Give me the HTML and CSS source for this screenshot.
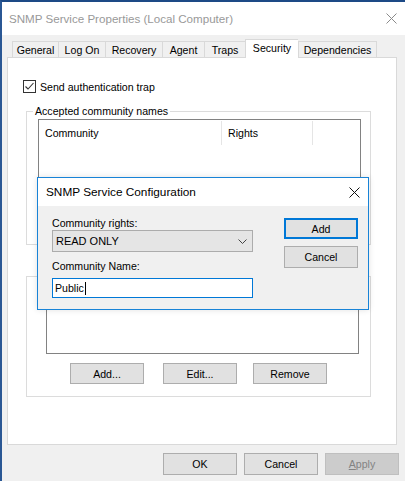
FILE: index.html
```html
<!DOCTYPE html>
<html>
<head>
<meta charset="utf-8">
<link rel="stylesheet" href="styles.css">
</head>
<body>
<div class="window">
  <div class="titlebar">
    <span class="title">SNMP Service Properties (Local Computer)</span>
    <svg class="close" width="11" height="11" viewBox="0 0 11 11"><path d="M0.5 0.5 L10.5 10.5 M10.5 0.5 L0.5 10.5" stroke="#8a8a8a" stroke-width="1" fill="none"/></svg>
  </div>
  <div class="main">
    <div class="tabs">
      <div class="tab w1">General</div>
      <div class="tab w2">Log On</div>
      <div class="tab w3">Recovery</div>
      <div class="tab w4">Agent</div>
      <div class="tab w5">Traps</div>
      <div class="tab w6 active">Security</div>
      <div class="tab w7 last">Dependencies</div>
    </div>
    <div class="panel">
      <div class="check">
        <svg class="box" width="13" height="13" viewBox="0 0 13 13"><rect x="0.5" y="0.5" width="12" height="12" fill="#fff" stroke="#333"/><path d="M2.5 6.5 L5 9 L10.5 3" stroke="#333" stroke-width="1.1" fill="none"/></svg>
        <span>Send authentication trap</span>
      </div>
      <fieldset class="group g1">
        <legend>Accepted community names</legend>
        <div class="list l1">
          <div class="lhead">
            <div class="col c1">Community</div>
            <div class="col c2">Rights</div>
            <div class="col c3"></div>
          </div>
        </div>
      </fieldset>
      <fieldset class="group g2">
        <div class="list l2"></div>
        <div class="btnrow">
          <div class="btn">Add...</div>
          <div class="btn b-edit">Edit...</div>
          <div class="btn b-remove">Remove</div>
        </div>
      </fieldset>
    </div>
    <div class="footer">
      <div class="btn">OK</div>
      <div class="btn">Cancel</div>
      <div class="btn disabled"><u>A</u>pply</div>
    </div>
  </div>

  <div class="dialog">
    <div class="dtitle">
      <span>SNMP Service Configuration</span>
      <svg class="dclose" width="11" height="11" viewBox="0 0 11 11"><path d="M0.5 0.5 L10.5 10.5 M10.5 0.5 L0.5 10.5" stroke="#111" stroke-width="1" fill="none"/></svg>
    </div>
    <div class="dbody">
      <div class="dleft">
        <div class="dlabel first">Community rights:</div>
        <div class="combo">
          <span>READ ONLY</span>
          <svg width="9" height="5" viewBox="0 0 9 5"><path d="M0.5 0.5 L4.5 4.5 L8.5 0.5" stroke="#444" stroke-width="1" fill="none"/></svg>
        </div>
        <div class="dlabel second">Community Name:</div>
        <div class="textbox"><span>Public</span><span class="caret"></span></div>
      </div>
      <div class="dright">
        <div class="btn default">Add</div>
        <div class="btn dcancel">Cancel</div>
      </div>
    </div>
  </div>
</div>
</body>
</html>
```

FILE: styles.css
```css
* { box-sizing: border-box; }
html, body { margin: 0; padding: 0; }
body {
  width: 405px;
  height: 481px;
  overflow: hidden;
  font-family: "Segoe UI", "Liberation Sans", Arial, sans-serif;
  font-size: 10.6px;
  color: #000;
  background: #f0f0f0;
}
.window {
  position: relative;
  width: 405px;
  height: 481px;
  border-left: 2px solid #2a5794;
  border-top: 2px solid #1d4a86;
  background: #f0f0f0;
  display: flex;
  flex-direction: column;
}
.titlebar {
  height: 33px;
  background: #fff;
  display: flex;
  align-items: center;
  justify-content: space-between;
  padding: 0 8px 0 7px;
}
.title {
  font-size: 11.6px;
  color: #999;
}
.main {
  flex: 1;
  padding-left: 5px;
  display: flex;
  flex-direction: column;
}
.tabs {
  margin-top: 4px;
  height: 19px;
  padding-left: 5px;
  display: flex;
  align-items: flex-end;
  border-bottom: 1px solid #d9d9d9;
  width: 390px;
}
.tab {
  height: 16px;
  border: 1px solid #d9d9d9;
  border-bottom: none;
  border-right: none;
  background: #f0f0f0;
  display: flex;
  align-items: center;
  justify-content: center;
  line-height: 14px;
}
.tab.last { border-right: 1px solid #d9d9d9; }
.tab.active {
  height: 19px;
  background: #fff;
  margin-bottom: -1px;
  align-items: flex-start;
  padding-top: 1px;
}
.w1 { width: 46px; }
.w2 { width: 47px; }
.w3 { width: 57px; }
.w4 { width: 42px; }
.w5 { width: 41px; }
.w6 { width: 53px; }
.w7 { width: 79px; }
.panel {
  width: 390px;
  height: 387px;
  background: #fff;
  border: 1px solid #d9d9d9;
  border-top: none;
  padding: 22px 0 0 18px;
}
.check {
  display: flex;
  align-items: center;
  margin-left: -3px;
  height: 13px;
}
.check .box { flex: none; margin-right: 4px; }
.group {
  margin: 0;
  padding: 0;
  border: 1px solid #dcdcdc;
  width: 345px;
  min-width: 0;
}
.group legend {
  padding: 0 2px;
  margin-left: -5px;
  line-height: 14px;
  height: 14px;
}
.g1 {
  margin-top: 11px;
  height: 141px;
  padding: 1px 0 0 11px;
}
.l1 {
  width: 323px;
  height: 130px;
}
.list {
  border: 1px solid #828282;
  background: #fff;
}
.lhead {
  display: flex;
  height: 25px;
  padding-top: 1px;
}
.col {
  height: 24px;
  line-height: 24px;
  padding-left: 6px;
  border-right: 1px solid #e5e5e5;
}
.c1 { width: 183px; }
.c2 { width: 91px; }
.c3 { width: 0; padding: 0; border: none; }
.g2 {
  margin-top: 31px;
  height: 121px;
  padding: 0 0 0 19px;
}
.l2 {
  width: 313px;
  height: 77px;
}
.btnrow {
  display: flex;
  margin-top: 9px;
  padding-left: 24px;
}
.btn {
  width: 74px;
  height: 21px;
  background: #e1e1e1;
  border: 1px solid #adadad;
  display: flex;
  align-items: center;
  justify-content: center;
  line-height: 14px;
}
.b-edit { margin-left: 19px; }
.b-remove { margin-left: 16px; }
.footer {
  display: flex;
  justify-content: flex-end;
  gap: 7px;
  padding: 8px 6px 0 0;
}
.footer .btn { width: 74px; height: 22px; }
.btn.disabled {
  background: #cccccc;
  border-color: #bfbfbf;
  color: #838383;
}
.btn.disabled u { text-decoration: underline; }

/* overlay dialog */
.dialog {
  position: absolute;
  left: 35px;
  top: 175px;
  width: 332px;
  height: 133px;
  border: 1px solid #1883d7;
  background: #f0f0f0;
  box-shadow: 0 0 6px rgba(0,0,0,0.12);
  display: flex;
  flex-direction: column;
}
.dtitle {
  height: 28px;
  background: #fff;
  display: flex;
  align-items: center;
  justify-content: space-between;
  padding: 0 8px 0 8px;
  font-size: 11.8px;
  flex: none;
}
.dbody {
  flex: 1;
  display: flex;
  padding: 0 10px 0 14px;
  justify-content: space-between;
}
.dleft { width: 201px; }
.dlabel { line-height: 14px; height: 14px; }
.dlabel.first { margin-top: 10px; }
.dlabel.second { margin-top: 7px; }
.combo {
  height: 22px;
  background: #e5e5e5;
  border: 1px solid #acacac;
  display: flex;
  align-items: center;
  justify-content: space-between;
  padding: 0 5px 0 3px;
}
.combo span { font-size: 11px; }
.textbox {
  margin-top: 5px;
  height: 20px;
  background: #fff;
  border: 1px solid #0078d7;
  display: flex;
  align-items: center;
  padding-left: 2px;
}
.caret {
  display: inline-block;
  width: 1px;
  height: 13px;
  background: #000;
  margin-left: 1px;
}
.dright {
  display: flex;
  flex-direction: column;
  padding-top: 12px;
}
.btn.default {
  border: 2px solid #0078d7;
  height: 21px;
}
.dcancel {
  margin-top: 7px;
  height: 22px;
}
```
